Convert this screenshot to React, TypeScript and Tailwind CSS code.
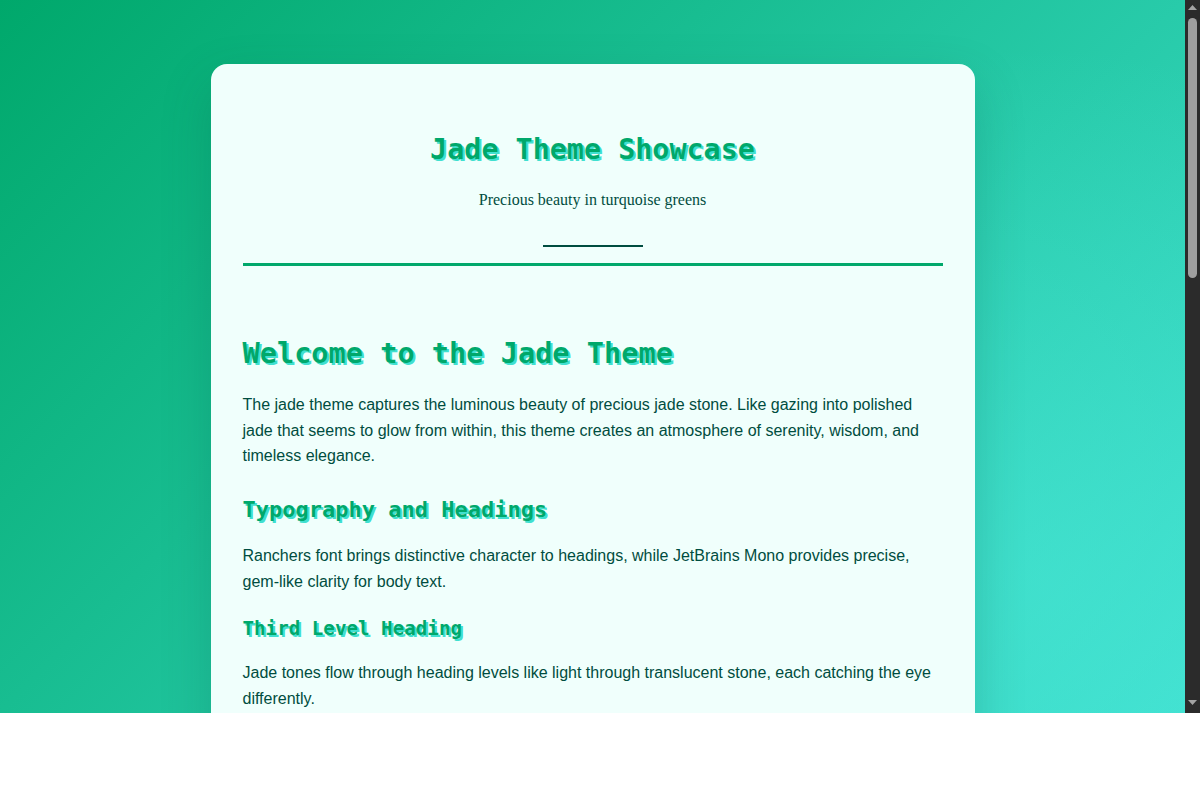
const heading = "font-['DejaVu_Sans_Mono',monospace] font-bold text-[#00a86b] [text-shadow:2px_2px_0_#40e0d0]"
const para = 'leading-[1.6] text-[#004d40]'

function Scrollbar() {
  return (
    <div className="flex w-[15px] shrink-0 flex-col items-center bg-[#2b2b2b]">
      <svg width="9" height="5" viewBox="0 0 9 5" className="mt-[5px]">
        <path d="M0 5 L4.5 0 L9 5 Z" fill="#a3a3a3" />
      </svg>
      <div className="mt-[8px] h-[260px] w-[9px] rounded-full bg-[#9f9f9f]" />
      <div className="flex-1" />
      <svg width="9" height="5" viewBox="0 0 9 5" className="mb-[8px]">
        <path d="M0 0 L9 0 L4.5 5 Z" fill="#a3a3a3" />
      </svg>
    </div>
  )
}

export default function App() {
  return (
    <div className="flex h-[713px] w-full font-['Liberation_Sans',Arial,sans-serif] text-[16px]">
      <div className="flex-1 overflow-hidden bg-[radial-gradient(circle_at_88%_82%,rgba(72,230,214,0.55),transparent_45%),linear-gradient(135deg,#00a86b_0%,#40e0d0_100%)] pt-16">
        <div className="mx-auto w-[764px] rounded-2xl bg-[#f0fffc] px-8 pb-24 shadow-[0_20px_50px_rgba(0,77,64,0.22)]">
          <header className="border-b-[3px] border-[#00a86b] pt-[69px] pb-[16px] text-center">
            <h1 className={`${heading} text-[28.4px] leading-[1.2]`}>Jade Theme Showcase</h1>
            <p className="mt-5 font-['Liberation_Serif',serif] leading-[1.6] text-[#004d40]">
              Precious beauty in turquoise greens
            </p>
            <div className="mx-auto mt-8 h-[2px] w-[100px] bg-[#004d40]" />
          </header>

          <main className="pt-[70px]">
            <h2 className={`${heading} text-[28.6px] leading-[1.2]`}>Welcome to the Jade Theme</h2>
            <p className={`${para} mt-[22px]`}>
              The jade theme captures the luminous beauty of precious jade stone. Like gazing into polished jade that
              seems to glow from within, this theme creates an atmosphere of serenity, wisdom, and timeless elegance.
            </p>

            <h3 className={`${heading} mt-[28px] text-[22px] leading-[1.2]`}>Typography and Headings</h3>
            <p className={`${para} mt-5`}>
              Ranchers font brings distinctive character to headings, while JetBrains Mono provides precise, gem-like
              clarity for body text.
            </p>

            <h4 className={`${heading} mt-[23px] text-[19.2px] leading-[1.2]`}>Third Level Heading</h4>
            <p className={`${para} mt-5`}>
              Jade tones flow through heading levels like light through translucent stone, each catching the eye
              differently.
            </p>
          </main>
        </div>
      </div>
      <Scrollbar />
    </div>
  )
}
